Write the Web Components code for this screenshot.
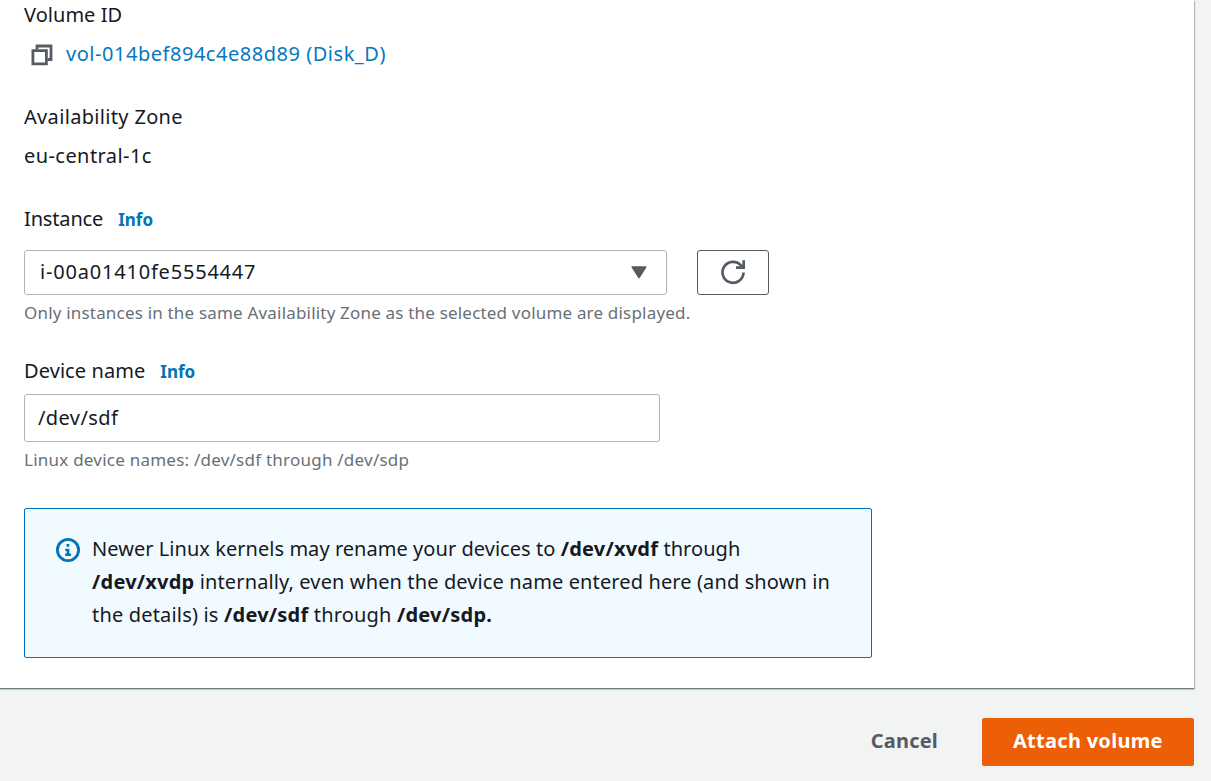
<!DOCTYPE html>
<html lang="en">
<head>
<meta charset="utf-8">
<title>Attach volume</title>
<style>
body{margin:0;background:#f2f3f3;color:#16191f;font:20px/33px "Noto Sans","Open Sans",sans-serif;overflow:hidden}
b{font-weight:700;letter-spacing:.22px}
</style>
</head>
<body>
<attach-page>
  <form-panel>
    <key-value><x-text slot="label" ls=".04">Volume ID</x-text><copy-link>vol-014bef894c4e88d89 (Disk_D)</copy-link></key-value>
    <key-value><x-text slot="label" ls=".33">Availability Zone</x-text><x-text ls=".43">eu-central-1c</x-text></key-value>
    <form-field style="--gap:15px">
      <x-text slot="label" ls="-.15">Instance</x-text>
      <select-box>i-00a01410fe5554447</select-box><refresh-button></refresh-button>
      <x-text slot="hint" ls=".19">Only instances in the same Availability Zone as the selected volume are displayed.</x-text>
    </form-field>
    <form-field style="--gap:7px">
      <x-text slot="label" ls=".08">Device name</x-text>
      <text-box>/dev/sdf</text-box>
      <x-text slot="hint" ls=".235">Linux device names: /dev/sdf through /dev/sdp</x-text>
    </form-field>
    <info-alert><x-text ls=".045">Newer Linux kernels may rename your devices to <b>/dev/xvdf</b> through</x-text><x-text ls=".12"><b>/dev/xvdp</b> internally, even when the device name entered here (and shown in</x-text><x-text ls=".18">the details) is <b>/dev/sdf</b> through <b>/dev/sdp.</b></x-text></info-alert>
  </form-panel>
  <action-button slot="actions">Cancel</action-button>
  <action-button slot="actions" primary>Attach volume</action-button>
</attach-page>
<script>
function define(name, html, setup) {
  customElements.define(name, class extends HTMLElement {
    constructor() {
      super();
      this.attachShadow({mode: 'open'}).innerHTML = html;
    }
    connectedCallback() { if (setup) setup(this); }
  });
}
define('x-text', `<style>:host{display:block;white-space:nowrap}</style><slot></slot>`,
  el => { el.style.letterSpacing = (el.getAttribute('ls') || 0) + 'px'; });
define('attach-page', `<style>
  :host{display:flex;flex-direction:column;height:781px}
  footer{display:flex;justify-content:flex-end;gap:12px;padding:30px 17px 0 0}
</style><slot></slot><footer><slot name="actions"></slot></footer>`);
define('form-panel', `<style>
  :host{display:flow-root;box-sizing:border-box;width:1194px;height:688px;padding-left:24px;background:#fff;
    box-shadow:0 1px 1px 0 rgba(0,28,36,.4),1px 1px 1px 0 rgba(0,28,36,.2),0 2px 1px 0 rgba(0,28,36,.1)}
  main{display:flex;flex-direction:column;margin-top:-2px}
</style><main><slot></slot></main>`);
define('key-value', `<style>
  :host{display:flex;flex-direction:column;gap:6px;margin-bottom:30px}
</style><slot name="label"></slot><slot></slot>`);
define('copy-link', `<style>
  :host{display:flex;align-items:center;color:#0578be;letter-spacing:.53px;white-space:nowrap}
  svg{flex:none;margin:3px 13px 0 7px}
</style><svg width="22" height="22" viewBox="0 0 22 22" fill="none" stroke="#545b64" stroke-width="2.8"><path d="M6 5.5V2H20V15.5H16.5"/><path d="M1.9 6.6H15.4V19.8H1.9Z"/></svg><slot></slot>`);
define('info-link', `<style>:host{display:block;color:#0073bb;font-size:17px;font-weight:700;padding-top:2px;line-height:31px}</style><slot></slot>`);
define('form-field', `<style>
  :host{display:flex;flex-direction:column;margin-bottom:28px}
  header{display:flex;gap:15px;height:33px;margin-bottom:var(--gap)}
  .row{display:flex;gap:30px}
  .hint{margin-top:4px;color:#687078;font-size:17px;line-height:27px}
</style><header><slot name="label"></slot><info-link>Info</info-link></header><div class="row"><slot></slot></div><div class="hint"><slot name="hint"></slot></div>`);
define('select-box', `<style>
  :host{display:flex;justify-content:space-between;box-sizing:border-box;width:643px;height:45px;padding:4px 19px 0 15px;border:1px solid #aab7b8;border-radius:3px;letter-spacing:.8px}
  svg{margin-top:11px}
</style><slot></slot><svg width="16" height="13" viewBox="0 0 16 13"><path d="M1.3 1H14.7L8 11.5Z" fill="#545b64" stroke="#545b64" stroke-width="1.6" stroke-linejoin="round"/></svg>`);
define('refresh-button', `<style>
  :host{display:flex;align-items:center;justify-content:center;box-sizing:border-box;width:72px;height:45px;border:1px solid #545b64;border-radius:3px}
  svg{margin-top:-1px}
</style><svg width="26" height="26" viewBox="0 0 26 26" fill="none" stroke="#545b64" stroke-width="2.7"><path d="M23.5 13.5A10.5 10.5 0 1 1 21 6.5L22.5 8"/><path d="M23.7 1.2V8.7H16"/><path d="M19.5 8.7L23.7 4.8V8.7Z" fill="#545b64" stroke="none"/></svg>`);
define('text-box', `<style>
  :host{display:block;box-sizing:border-box;width:636px;height:48px;padding:6px 13px 0;border:1px solid #aab7b8;border-radius:3px;letter-spacing:.4px}
</style><slot></slot>`);
define('info-alert', `<style>
  :host{display:flex;box-sizing:border-box;width:848px;height:150px;margin-top:7px;padding:23px 0 0 31px;border:1px solid #0073bb;border-radius:2px;background:#f1faff}
  svg{flex:none;margin:6px 12px 0 0}
</style><svg width="24" height="24" viewBox="0 0 24 24"><circle cx="12" cy="12" r="10.6" fill="none" stroke="#0073bb" stroke-width="2.8"/><path d="M10.5 6H13.3V8.7H10.5ZM9.2 10.7H13.3V15.6H15V18H9.2V15.6H10.6V13H9.2Z" fill="#0073bb"/></svg><div><slot></slot></div>`);
define('action-button', `<style>
  :host{display:block;box-sizing:border-box;height:48px;padding:6px 32px 0;border-radius:2px;color:#545b64;font-weight:700;letter-spacing:.2px;white-space:nowrap}
  :host([primary]){width:212px;padding:6px 0 0 31px;letter-spacing:.28px;background:#ec5f07;color:#fff}
</style><slot></slot>`);
</script>
</body>
</html>
